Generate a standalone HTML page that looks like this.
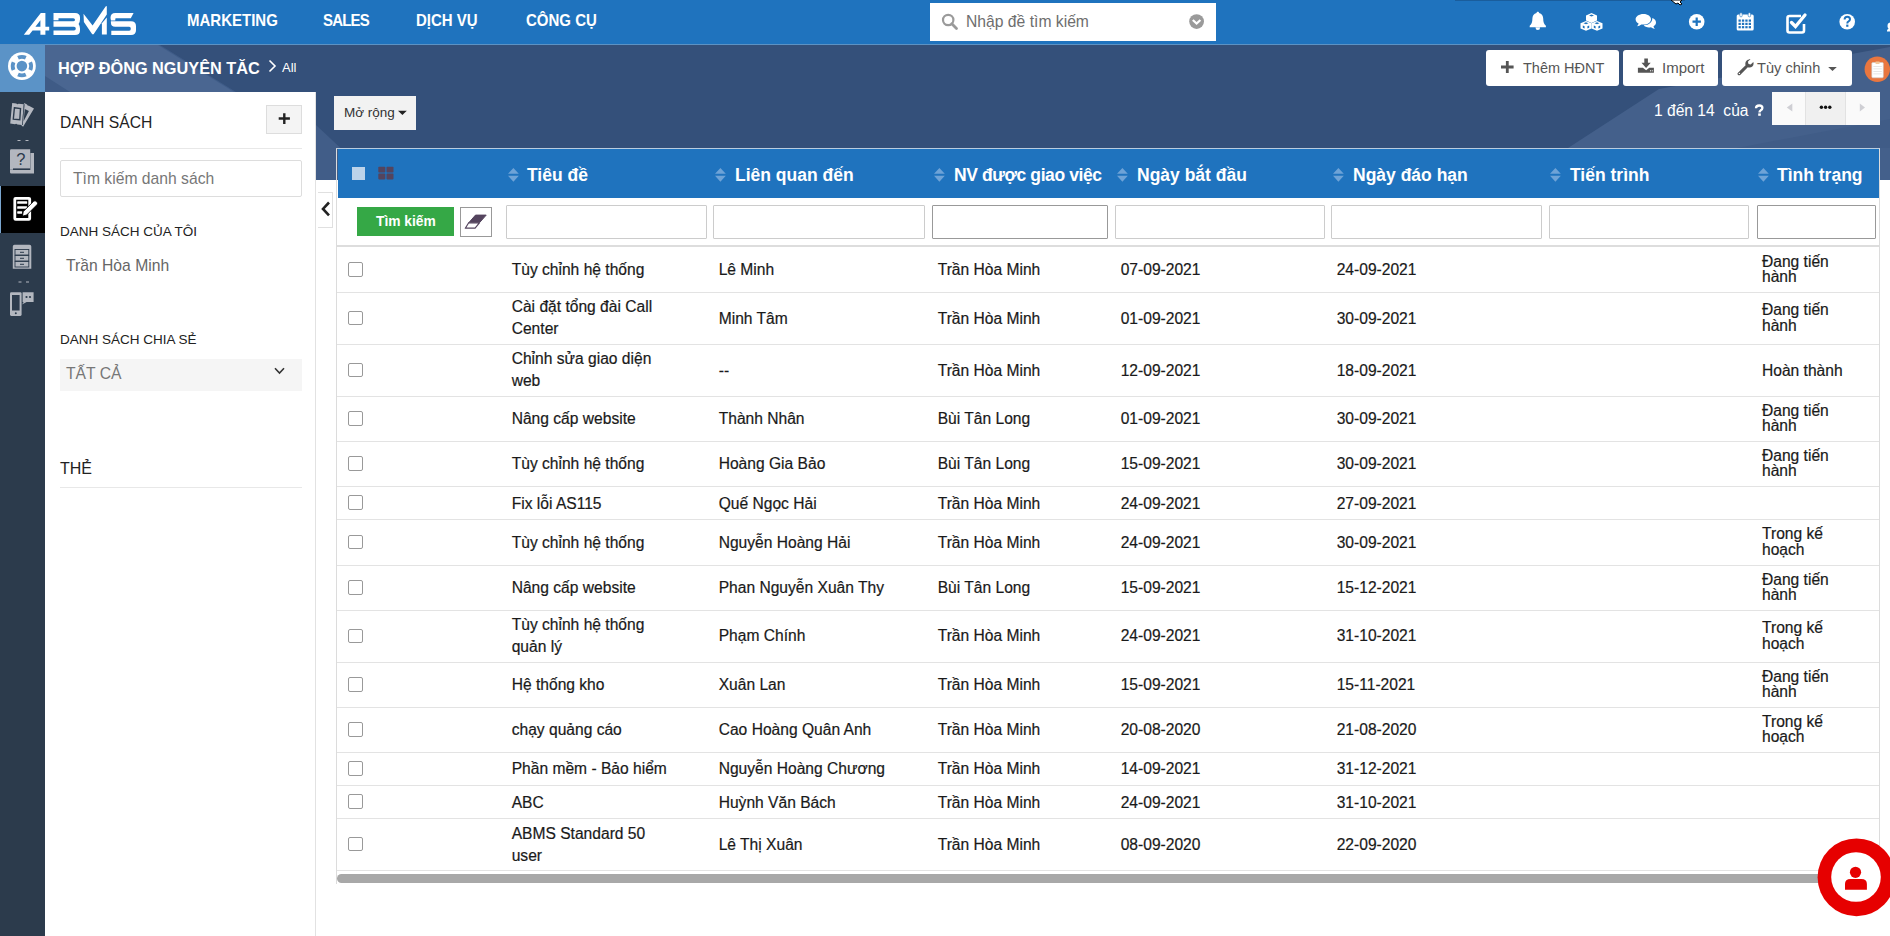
<!DOCTYPE html>
<html><head><meta charset="utf-8">
<style>
*{box-sizing:border-box;margin:0;padding:0}
html,body{width:1890px;height:936px;overflow:hidden;background:#fff;font-family:"Liberation Sans",sans-serif;color:#222}
.a{position:absolute}
#top{left:0;top:0;width:1890px;height:44px;background:#1f73be}
#topline{left:0;top:44px;width:1890px;height:1px;background:#5c92c4}
.nav{top:11px;font-size:15px;font-weight:bold;color:#fff;line-height:18px;transform:scaleY(1.1)}
#crumb{left:0;top:45px;width:1890px;height:891px;background:#34507a;overflow:hidden}
#side{left:0;top:92px;width:45px;height:844px;background:#2c3b4c}
#lifebuoy{left:0;top:45px;width:45px;height:47px;background:#5b93c7}
#panel{left:45px;top:92px;width:271px;height:844px;background:#fff;border-right:1px solid #e2e2e2}
#main{left:316px;top:180px;width:1574px;height:756px;background:#fff}
.btn{background:#fff;border-radius:3px;font-size:15px;color:#555;line-height:20px}
.hdr{top:149px;height:49px;background:#1f73be}
.hd{top:164px;font-size:17.5px;font-weight:bold;color:#fff;line-height:22px;white-space:nowrap}
.sort{top:168px;width:11px;height:14px}
.fin{top:205px;height:34px;border:1px solid #ccc;background:#fff;border-radius:1px}
.row{left:337px;width:1542px;border-bottom:1px solid #e3e3e3}
.c{font-size:15.6px;line-height:22px;color:#1a1a1a;white-space:nowrap;-webkit-text-stroke:0.2px #1a1a1a}
.st{font-size:15.6px;line-height:15.7px;color:#1a1a1a;-webkit-text-stroke:0.2px #1a1a1a}
.cb{width:14.5px;height:14.5px;border:1.2px solid #999;border-radius:2px;background:#fff}
</style></head><body>
<div id="crumb" class="a"></div>
<div id="top" class="a"></div>
<div id="topline" class="a"></div>
<div id="lifebuoy" class="a"></div>
<div id="side" class="a"></div>
<!-- background polys -->
<svg class="a" style="left:0;top:45px" width="1890" height="140" viewBox="0 45 1890 140">
<polygon points="45,45 160,45 236,92 316,92 316,185 45,185" fill="#3f5c88"/>
<polygon points="45,45 158,45 234,92 45,92" fill="#4a6691"/>
<polygon points="45,76 45,92 70,92" fill="#3f5b86"/>
<polygon points="316,125 316,185 380,185" fill="#415d88"/>
<polygon points="1568,148 1659,89 1890,47 1890,185 1568,185" fill="#44608b"/>
<polygon points="1737,148 1890,119 1890,148" fill="#405c87"/>
</svg>
<!-- lifebuoy -->
<svg class="a" style="left:0;top:45px" width="45" height="47" viewBox="0 0 45 47">
<circle cx="21.9" cy="21.1" r="13.9" fill="#fff"/>
<circle cx="21.9" cy="21.1" r="5.3" fill="#5b93c7"/>
<g fill="#5b93c7">
<path d="M17.21,11.04 A11.1,11.1 0 0 1 26.59,11.04 L24.99,14.48 A7.3,7.3 0 0 0 18.81,14.48 Z"/>
<path d="M17.21,31.16 A11.1,11.1 0 0 0 26.59,31.16 L24.99,27.72 A7.3,7.3 0 0 1 18.81,27.72 Z"/>
<path d="M11.84,16.41 A11.1,11.1 0 0 0 11.84,25.79 L15.28,24.19 A7.3,7.3 0 0 1 15.28,18.01 Z"/>
<path d="M31.96,16.41 A11.1,11.1 0 0 1 31.96,25.79 L28.52,24.19 A7.3,7.3 0 0 0 28.52,18.01 Z"/>
</g>
</svg>
<!-- breadcrumb chevron -->
<svg class="a" style="left:266px;top:58px" width="12" height="16" viewBox="0 0 12 16"><path d="M3.5,2.5 L9,8 L3.5,13.5" fill="none" stroke="#fff" stroke-width="1.6"/></svg>
<!-- sidebar -->
<svg class="a" style="left:0;top:92px" width="45" height="240" viewBox="0 92 45 240">
<path fill="#b5b9c1" d="M24.2,103.1 L27,104.6 Q27.6,106 28.9,105.8 L34,108.5 L23.1,126.7 L21.5,125.5 Z"/>
<path fill="#b5b9c1" d="M12.2,103.1 L16.3,103.5 Q17.4,104.8 18.6,103.8 L23.8,104.2 L22,124.9 L17.4,124.5 Q16.2,123.2 15,124.2 L10.2,123.5 Z"/>
<path fill="#2c3b4c" d="M23.8,104.2 L24.6,104.3 L22.8,125 L22,124.9 Z"/>
<path fill="#2c3b4c" d="M24.8,109 L28.9,111.1 L23.6,121.3 Z"/>
<polygon points="14.4,107.8 20.5,108.5 19.8,119.8 13.3,119.1" fill="none" stroke="#2c3b4c" stroke-width="1.4"/>
<rect x="17.5" y="140" width="3" height="1" fill="#b3b7bf"/><rect x="25.5" y="140" width="3" height="1" fill="#b3b7bf"/>
<path d="M10,150.5 q0,-1.2 1.2,-1.2 h19 v20.5 h-20.2 Z" fill="#b3b7bf"/>
<path d="M30.4,153 h3.6 v20.5 h-22.8 q-1.2,0 -1.2,-1.2 v-2.2 h20.4 Z" fill="#b3b7bf"/>
<rect x="13" y="168.4" width="17" height="1.6" fill="#2c3b4c"/>
<text x="20.8" y="165.3" font-family="Liberation Sans" font-size="16.5" fill="#2c3b4c" text-anchor="middle">?</text>
</svg>
<div class="a" style="left:0;top:186px;width:45px;height:47px;background:#000"></div>
<div class="a" style="left:0;top:186px;width:1px;height:47px;background:#7aa6d0"></div>
<svg class="a" style="left:0;top:186px" width="45" height="47" viewBox="0 186 45 47">
<rect x="14.8" y="198.3" width="14.9" height="21.1" rx="0.8" fill="none" stroke="#fff" stroke-width="2.8"/>
<g fill="#fff"><rect x="17.2" y="201.2" width="10" height="2.6" rx="0.6"/><rect x="17.2" y="206.2" width="10" height="2.6" rx="0.6"/><rect x="17.2" y="211.2" width="5" height="2.5" rx="0.6"/></g>
<path d="M22.4,216.2 L23.2,211.6 L33.6,201.3 Q35,200 36.4,201.4 L37,202 Q38.3,203.4 37,204.7 L26.7,215 Z" fill="#fff" stroke="#000" stroke-width="0.9"/>
</svg>
<svg class="a" style="left:0;top:236px" width="45" height="90" viewBox="0 236 45 90">
<path d="M14.5,244.7 h15 q1.8,0 1.8,1.8 v22.2 h-18.5 v-22.2 q0,-1.8 1.7,-1.8 Z" fill="#b3b7bf"/>
<g fill="none" stroke="#2c3b4c" stroke-width="0.9"><rect x="15" y="249.5" width="13.8" height="5.5"/><rect x="15" y="255.5" width="13.8" height="5.5"/><rect x="15" y="261.5" width="13.8" height="5.5"/></g>
<g fill="#2c3b4c"><rect x="20" y="251.8" width="4" height="1"/><rect x="20" y="257.8" width="4" height="1"/><rect x="20" y="263.8" width="4" height="1"/></g>
<rect x="18.5" y="281.5" width="3" height="1" fill="#b3b7bf"/><rect x="26" y="281.5" width="3" height="1" fill="#b3b7bf"/>
<rect x="10" y="292.3" width="11.6" height="23.6" rx="1.3" fill="#b3b7bf"/>
<rect x="12" y="295" width="7.6" height="15.5" fill="#2c3b4c"/>
<circle cx="15.8" cy="313.3" r="1" fill="#2c3b4c"/>
<path d="M22.6,292.3 h11 v9.8 h-7 l-4.5,2.5 l1.5,-2.5 h-1 Z" fill="#b3b7bf"/>
<circle cx="26.5" cy="297" r="1.1" fill="#2c3b4c"/><circle cx="30" cy="297" r="1.1" fill="#2c3b4c"/>
</svg>

<div id="panel" class="a"></div>
<div id="main" class="a"></div>

<!-- logo -->
<svg class="a" style="left:0;top:0" width="150" height="44" viewBox="0 0 150 44">
<path fill="#fff" fill-rule="evenodd" d="M23.8,34.8 L29.2,34.8 L32.6,30.5 L40.4,30.5 L40.4,34.8 L45.4,34.8 L45.4,30.5 L49.2,30.5 L49.2,26.7 L45.4,26.7 L45.4,13 L40.8,13 Z M35.4,26.7 L40.4,26.7 L40.4,20.2 Z"/>
<path fill="#fff" fill-rule="evenodd" d="M53.5,13 H75 Q80,13 80,17.5 V19.5 Q80,22 78.6,24 Q80,26 80,28.5 V30.5 Q80,35 75,35 H53.5 V30.5 H74 Q75.8,30.5 75.8,28.6 Q75.8,26.7 74,26.7 H53.5 V21.3 H73.3 Q75,21.3 75,19.75 Q75,18.2 73.3,18.2 H58.5 V20.3 H53.5 Z"/>
<path fill="#fff" d="M83.5,13.8 L92.6,25.4 L105.6,6.4 L106.8,6.1 L106.8,14.6 L93.6,34.3 L92.2,34.3 L83.9,21.9 Z"/>
<path fill="#fff" d="M101.9,23.2 L106.8,17.4 L106.8,34.5 L101.9,34.5 Z"/>
<path fill="#fff" d="M115.3,13 H133.6 L130.8,18.2 H115.8 Q115.3,18.2 115.3,19.2 V20.6 H111 Q110.5,18.5 110.5,17.8 Q110.5,13 115.3,13 Z"/>
<path fill="#fff" d="M110.9,21.2 H131 Q136,21.2 136,26 V30.2 Q136,34.9 131,34.9 H111.3 V30.8 H129.2 Q130.8,30.8 130.8,28.8 Q130.8,26.8 129.2,26.8 H115.2 Q110.9,26.8 110.9,22.5 Z"/>
</svg>
<!-- top dark line + cursor -->
<div class="a" style="left:1455px;top:0;width:230px;height:1px;background:#1a5d9c"></div>
<svg class="a" style="left:1668px;top:0" width="16" height="6" viewBox="0 0 16 6"><path d="M3,0 L8,4 L10,3 L12,5 L14,4 L12,2 L14,0 Z" fill="#fff" stroke="#000" stroke-width="1"/></svg>
<!-- top icons -->
<svg class="a" style="left:1525px;top:8px" width="26" height="26" viewBox="0 0 26 26">
<path fill="#fff" d="M12.8,3.7 c0.9,0 1.3,0.6 1.3,1.3 c2.7,0.6 4.1,2.8 4.1,5.6 c0,3.6 0.9,6 2.7,7.2 v1.4 H4.7 v-1.4 c1.8,-1.2 2.7,-3.6 2.7,-7.2 c0,-2.8 1.4,-5 4.1,-5.6 c0,-0.7 0.4,-1.3 1.3,-1.3 Z M10.5,19.4 h4.6 a2.3,2.6 0 0 1 -4.6,0 Z"/>
</svg>
<svg class="a" style="left:1578px;top:10px" width="27" height="23" viewBox="0 0 27 23">
<g fill="#fff">
<path d="M13.5,3.1 l5.5,2.3 v5.2 l-5.5,2.3 l-5.5,-2.3 v-5.2 Z"/>
<path d="M8,10.9 l5.5,2.3 v5.2 l-5.5,2.3 l-5.5,-2.3 v-5.2 Z"/>
<path d="M19,10.9 l5.5,2.3 v5.2 l-5.5,2.3 l-5.5,-2.3 v-5.2 Z"/>
</g>
<g fill="#1f73be">
<path d="M11,5.4 l2.5,-1 l2.5,1 l-2.5,1 Z"/>
<path d="M5.5,13.2 l2.5,-1 l2.5,1 l-2.5,1 Z"/>
<path d="M16.5,13.2 l2.5,-1 l2.5,1 l-2.5,1 Z"/>
<path d="M4.8,15.5 l1.8,0.8 v2.2 l-1.8,-0.8 Z"/><path d="M9.4,16.3 l1.8,-0.8 v2.2 l-1.8,0.8 Z"/>
<path d="M15.8,15.5 l1.8,0.8 v2.2 l-1.8,-0.8 Z"/><path d="M20.4,16.3 l1.8,-0.8 v2.2 l-1.8,0.8 Z"/>
</g>
</svg>
<svg class="a" style="left:1634px;top:11px" width="24" height="20" viewBox="0 0 24 20">
<path fill="#fff" d="M9.5,3 c4.5,0 7.5,2.5 7.5,5.3 c0,3 -3,5.3 -7.5,5.3 c-0.8,0 -1.5,-0.1 -2.2,-0.2 c-1.2,1 -2.7,1.6 -4.3,1.8 c0.8,-0.8 1.4,-1.6 1.6,-2.6 c-1.9,-1 -3,-2.6 -3,-4.3 c0,-2.8 3.4,-5.3 7.9,-5.3 Z"/>
<path fill="#fff" d="M18.3,7 c2.3,0.9 3.7,2.6 3.7,4.5 c0,1.6 -1,3 -2.5,3.8 c0.2,1 0.7,1.8 1.4,2.6 c-1.5,-0.2 -2.9,-0.8 -4,-1.7 c-0.6,0.1 -1.2,0.2 -1.9,0.2 c-2.3,0 -4.3,-0.8 -5.3,-2.1 c5.5,-0.2 8.8,-3.3 8.6,-7.3 Z"/>
</svg>
<svg class="a" style="left:1686px;top:11px" width="22" height="22" viewBox="0 0 22 22">
<circle cx="10.7" cy="10.7" r="7.8" fill="#fff"/>
<path d="M10.7,6.5 V14.9 M6.5,10.7 H14.9" stroke="#1f73be" stroke-width="2.2"/>
</svg>
<svg class="a" style="left:1734px;top:10px" width="22" height="24" viewBox="0 0 22 24">
<rect x="2.7" y="4.5" width="17" height="16" rx="1.5" fill="#fff"/>
<g fill="#1f73be">
<rect x="4.5" y="9.5" width="2.3" height="2.2"/><rect x="7.9" y="9.5" width="2.3" height="2.2"/><rect x="11.3" y="9.5" width="2.3" height="2.2"/><rect x="14.7" y="9.5" width="2.3" height="2.2"/>
<rect x="4.5" y="12.8" width="2.3" height="2.2"/><rect x="7.9" y="12.8" width="2.3" height="2.2"/><rect x="11.3" y="12.8" width="2.3" height="2.2"/><rect x="14.7" y="12.8" width="2.3" height="2.2"/>
<rect x="4.5" y="16.1" width="2.3" height="2.2"/><rect x="7.9" y="16.1" width="2.3" height="2.2"/><rect x="11.3" y="16.1" width="2.3" height="2.2"/><rect x="14.7" y="16.1" width="2.3" height="2.2"/>
</g>
<rect x="5.8" y="2.8" width="2.4" height="4" rx="1" fill="#fff" stroke="#1f73be" stroke-width="0.6"/>
<rect x="14.2" y="2.8" width="2.4" height="4" rx="1" fill="#fff" stroke="#1f73be" stroke-width="0.6"/>
</svg>
<svg class="a" style="left:1784px;top:11px" width="26" height="25" viewBox="0 0 26 25">
<path d="M17,5 H5.5 Q3.5,5 3.5,7 V19.5 Q3.5,21.5 5.5,21.5 H18 Q20,21.5 20,19.5 V13" fill="none" stroke="#fff" stroke-width="2.6"/>
<path d="M7.5,11.5 L11.5,15.5 L21,4" fill="none" stroke="#fff" stroke-width="3.3" stroke-linecap="round"/>
</svg>
<svg class="a" style="left:1837px;top:11px" width="22" height="22" viewBox="0 0 22 22">
<circle cx="10.2" cy="10.7" r="7.8" fill="#fff"/>
<path d="M7.6,8.6 Q7.6,5.8 10.3,5.8 Q13,5.8 13,8.3 Q13,9.8 11.3,10.6 Q10.3,11.1 10.3,12.5" fill="none" stroke="#1f73be" stroke-width="2"/>
<rect x="9.2" y="13.6" width="2.2" height="2.2" fill="#1f73be"/>
</svg>
<svg class="a" style="left:1880px;top:18px" width="10" height="16" viewBox="0 0 10 16"><circle cx="11" cy="8" r="3.5" fill="#fff"/><path d="M7,13 Q7,10.5 10,10.5 V13.5 H7Z" fill="#fff"/></svg>

<!-- nav -->
<div class="a nav" style="left:187px">MARKETING</div>
<div class="a nav" style="left:323px;letter-spacing:-0.8px">SALES</div>
<div class="a nav" style="left:416px">DỊCH VỤ</div>
<div class="a nav" style="left:526px">CÔNG CỤ</div>

<!-- search -->
<div class="a" style="left:930px;top:3px;width:286px;height:38px;background:#fff"></div>
<div class="a" style="left:966px;top:12px;font-size:15.7px;line-height:20px;color:#6e6e6e">Nhập đề tìm kiếm</div>

<svg class="a" style="left:940px;top:12px" width="20" height="20" viewBox="940 12 20 20">
<circle cx="948.2" cy="20" r="5.2" fill="none" stroke="#9a9a9a" stroke-width="2.2"/>
<path d="M951.8,23.8 L956.5,28.5" stroke="#9a9a9a" stroke-width="2.8" stroke-linecap="round"/>
</svg>
<svg class="a" style="left:1186px;top:12px" width="20" height="20" viewBox="1186 12 20 20">
<circle cx="1196.6" cy="21.6" r="7.4" fill="#9a9a9a"/>
<path d="M1192.8,20 L1196.6,23.6 L1200.4,20" fill="none" stroke="#fff" stroke-width="2.2"/>
</svg>
<!-- breadcrumb -->
<div class="a" style="left:58px;top:58px;font-size:16.3px;font-weight:bold;color:#fff;line-height:20px;white-space:nowrap">HỢP ĐÔNG NGUYÊN TĂC</div>
<div class="a" style="left:282px;top:60px;font-size:13px;color:#fff;line-height:16px">All</div>

<!-- buttons -->
<div class="a btn" style="left:1486px;top:50px;width:133px;height:36px"></div>
<div class="a btn" style="left:1623px;top:50px;width:95px;height:36px"></div>
<div class="a btn" style="left:1722px;top:50px;width:130px;height:36px"></div>
<div class="a" style="left:1523px;top:58px;font-size:14.5px;color:#555;line-height:20px">Thêm HĐNT</div>
<div class="a" style="left:1662px;top:58px;font-size:15px;color:#555;line-height:20px">Import</div>
<div class="a" style="left:1757px;top:58px;font-size:14.6px;color:#555;line-height:20px">Tùy chỉnh</div>

<!-- pagination -->
<div class="a" style="left:1654px;top:99.5px;font-size:15.6px;color:#fff;line-height:22px;white-space:pre">1 đến 14  của</div>
<div class="a" style="left:1772px;top:92px;width:108px;height:33px;background:#fafafa"></div>

<!-- mo rong -->
<div class="a" style="left:334px;top:96px;width:82px;height:34px;background:#f2f2f2"></div>
<div class="a" style="left:344px;top:102.5px;font-size:13.5px;color:#333;line-height:20px">Mở rộng</div>

<!-- panel content -->
<div class="a" style="left:60px;top:113px;font-size:15.7px;color:#222;line-height:20px">DANH SÁCH</div>
<div class="a" style="left:266px;top:105px;width:36px;height:29px;background:#f4f4f4;border:1px solid #ddd"></div>
<div class="a" style="left:60px;top:148px;width:242px;height:1px;background:#e8e8e8"></div>
<div class="a" style="left:60px;top:160px;width:242px;height:37px;border:1px solid #ddd;border-radius:2px"></div>
<div class="a" style="left:73px;top:169px;font-size:15.7px;color:#777;line-height:20px">Tìm kiếm danh sách</div>
<div class="a" style="left:60px;top:223.5px;font-size:13.5px;color:#222;line-height:16px">DANH SÁCH CỦA TÔI</div>
<div class="a" style="left:66px;top:256px;font-size:15.7px;color:#666;line-height:20px">Trần Hòa Minh</div>
<div class="a" style="left:60px;top:332px;font-size:13.5px;color:#222;line-height:16px">DANH SÁCH CHIA SẺ</div>
<div class="a" style="left:60px;top:359px;width:242px;height:32px;background:#f5f5f5"></div>
<div class="a" style="left:66px;top:364px;font-size:15.7px;color:#777;line-height:20px">TẤT CẢ</div>
<div class="a" style="left:60px;top:458.5px;font-size:16px;color:#222;line-height:20px">THẺ</div>
<div class="a" style="left:60px;top:487px;width:242px;height:1px;background:#e8e8e8"></div>

<!-- table -->
<div class="a" style="left:336px;top:148px;width:1544px;height:736px;border:1px solid #dcdcdc;border-bottom:none;border-top-color:#b9cde0"></div>
<div class="a hdr" style="left:338px;width:1541px"></div>
<div class="a" style="left:337px;top:198px;width:1542px;height:47px;background:#fff"></div>
<div class="a" style="left:337px;top:245px;width:1542px;height:2px;background:#dddddd"></div>
<!-- header cells -->

<div class="a hd" style="left:527px">Tiêu đề</div>
<div class="a hd" style="left:735px">Liên quan đến</div>
<div class="a hd" style="left:954px;letter-spacing:-0.4px">NV được giao việc</div>
<div class="a hd" style="left:1137px">Ngày bắt đầu</div>
<div class="a hd" style="left:1353px">Ngày đáo hạn</div>
<div class="a hd" style="left:1570px">Tiến trình</div>
<div class="a hd" style="left:1777px">Tình trạng</div>
<!-- filter -->
<div class="a" style="left:357px;top:207px;width:97px;height:29px;background:#35a846"></div>
<div class="a" style="left:376px;top:213px;font-size:13.8px;font-weight:bold;color:#fff;line-height:18px">Tìm kiếm</div>
<div class="a" style="left:460px;top:207px;width:32px;height:30px;border:1px solid #999;background:#fff"></div>
<div class="a fin" style="left:506px;width:201px"></div>
<div class="a fin" style="left:713px;width:212px"></div>
<div class="a fin" style="left:932px;width:176px;border-color:#999"></div>
<div class="a fin" style="left:1115px;width:210px"></div>
<div class="a fin" style="left:1331px;width:211px"></div>
<div class="a fin" style="left:1549px;width:200px"></div>
<div class="a fin" style="left:1757px;width:119px;border-color:#999"></div>
<!--ROWS-->
<div class="a row" style="top:247px;height:46px"></div>
<div class="a cb" style="left:348px;top:262.3px"></div>
<div class="a c" style="left:511.7px;top:258.5px">Tùy chỉnh hệ thống</div>
<div class="a c" style="left:718.7px;top:258.5px">Lê Minh</div>
<div class="a c" style="left:937.7px;top:258.5px">Trần Hòa Minh</div>
<div class="a c" style="left:1120.7px;top:258.5px">07-09-2021</div>
<div class="a c" style="left:1336.7px;top:258.5px">24-09-2021</div>
<div class="a st" style="left:1762px;top:253.5px">Đang tiến<br>hành</div>
<div class="a row" style="top:292px;height:53px"></div>
<div class="a cb" style="left:348px;top:310.8px"></div>
<div class="a c" style="left:511.7px;top:296.0px">Cài đặt tổng đài Call<br>Center</div>
<div class="a c" style="left:718.7px;top:308.0px">Minh Tâm</div>
<div class="a c" style="left:937.7px;top:308.0px">Trần Hòa Minh</div>
<div class="a c" style="left:1120.7px;top:308.0px">01-09-2021</div>
<div class="a c" style="left:1336.7px;top:308.0px">30-09-2021</div>
<div class="a st" style="left:1762px;top:302.0px">Đang tiến<br>hành</div>
<div class="a row" style="top:344px;height:53px"></div>
<div class="a cb" style="left:348px;top:362.8px"></div>
<div class="a c" style="left:511.7px;top:348.0px">Chỉnh sửa giao diện<br>web</div>
<div class="a c" style="left:718.7px;top:360.0px">--</div>
<div class="a c" style="left:937.7px;top:360.0px">Trần Hòa Minh</div>
<div class="a c" style="left:1120.7px;top:360.0px">12-09-2021</div>
<div class="a c" style="left:1336.7px;top:360.0px">18-09-2021</div>
<div class="a st" style="left:1762px;top:362.6px">Hoàn thành</div>
<div class="a row" style="top:396px;height:46px"></div>
<div class="a cb" style="left:348px;top:411.3px"></div>
<div class="a c" style="left:511.7px;top:407.5px">Nâng cấp website</div>
<div class="a c" style="left:718.7px;top:407.5px">Thành Nhân</div>
<div class="a c" style="left:937.7px;top:407.5px">Bùi Tân Long</div>
<div class="a c" style="left:1120.7px;top:407.5px">01-09-2021</div>
<div class="a c" style="left:1336.7px;top:407.5px">30-09-2021</div>
<div class="a st" style="left:1762px;top:402.5px">Đang tiến<br>hành</div>
<div class="a row" style="top:441px;height:46px"></div>
<div class="a cb" style="left:348px;top:456.3px"></div>
<div class="a c" style="left:511.7px;top:452.5px">Tùy chỉnh hệ thống</div>
<div class="a c" style="left:718.7px;top:452.5px">Hoàng Gia Bảo</div>
<div class="a c" style="left:937.7px;top:452.5px">Bùi Tân Long</div>
<div class="a c" style="left:1120.7px;top:452.5px">15-09-2021</div>
<div class="a c" style="left:1336.7px;top:452.5px">30-09-2021</div>
<div class="a st" style="left:1762px;top:447.5px">Đang tiến<br>hành</div>
<div class="a row" style="top:486px;height:34px"></div>
<div class="a cb" style="left:348px;top:495.3px"></div>
<div class="a c" style="left:511.7px;top:492.5px">Fix lỗi AS115</div>
<div class="a c" style="left:718.7px;top:492.5px">Quế Ngọc Hải</div>
<div class="a c" style="left:937.7px;top:492.5px">Trần Hòa Minh</div>
<div class="a c" style="left:1120.7px;top:492.5px">24-09-2021</div>
<div class="a c" style="left:1336.7px;top:492.5px">27-09-2021</div>
<div class="a row" style="top:519px;height:47px"></div>
<div class="a cb" style="left:348px;top:534.8px"></div>
<div class="a c" style="left:511.7px;top:532.0px">Tùy chỉnh hệ thống</div>
<div class="a c" style="left:718.7px;top:532.0px">Nguyễn Hoàng Hải</div>
<div class="a c" style="left:937.7px;top:532.0px">Trần Hòa Minh</div>
<div class="a c" style="left:1120.7px;top:532.0px">24-09-2021</div>
<div class="a c" style="left:1336.7px;top:532.0px">30-09-2021</div>
<div class="a st" style="left:1762px;top:526.0px">Trong kế<br>hoạch</div>
<div class="a row" style="top:565px;height:46px"></div>
<div class="a cb" style="left:348px;top:580.3px"></div>
<div class="a c" style="left:511.7px;top:576.5px">Nâng cấp website</div>
<div class="a c" style="left:718.7px;top:576.5px">Phan Nguyễn Xuân Thy</div>
<div class="a c" style="left:937.7px;top:576.5px">Bùi Tân Long</div>
<div class="a c" style="left:1120.7px;top:576.5px">15-09-2021</div>
<div class="a c" style="left:1336.7px;top:576.5px">15-12-2021</div>
<div class="a st" style="left:1762px;top:571.5px">Đang tiến<br>hành</div>
<div class="a row" style="top:610px;height:53px"></div>
<div class="a cb" style="left:348px;top:628.8px"></div>
<div class="a c" style="left:511.7px;top:614.0px">Tùy chỉnh hệ thống<br>quản lý</div>
<div class="a c" style="left:718.7px;top:625.0px">Phạm Chính</div>
<div class="a c" style="left:937.7px;top:625.0px">Trần Hòa Minh</div>
<div class="a c" style="left:1120.7px;top:625.0px">24-09-2021</div>
<div class="a c" style="left:1336.7px;top:625.0px">31-10-2021</div>
<div class="a st" style="left:1762px;top:620.0px">Trong kế<br>hoạch</div>
<div class="a row" style="top:662px;height:46px"></div>
<div class="a cb" style="left:348px;top:677.3px"></div>
<div class="a c" style="left:511.7px;top:673.5px">Hệ thống kho</div>
<div class="a c" style="left:718.7px;top:673.5px">Xuân Lan</div>
<div class="a c" style="left:937.7px;top:673.5px">Trần Hòa Minh</div>
<div class="a c" style="left:1120.7px;top:673.5px">15-09-2021</div>
<div class="a c" style="left:1336.7px;top:673.5px">15-11-2021</div>
<div class="a st" style="left:1762px;top:668.5px">Đang tiến<br>hành</div>
<div class="a row" style="top:707px;height:46px"></div>
<div class="a cb" style="left:348px;top:722.3px"></div>
<div class="a c" style="left:511.7px;top:718.5px">chạy quảng cáo</div>
<div class="a c" style="left:718.7px;top:718.5px">Cao Hoàng Quân Anh</div>
<div class="a c" style="left:937.7px;top:718.5px">Trần Hòa Minh</div>
<div class="a c" style="left:1120.7px;top:718.5px">20-08-2020</div>
<div class="a c" style="left:1336.7px;top:718.5px">21-08-2020</div>
<div class="a st" style="left:1762px;top:713.5px">Trong kế<br>hoạch</div>
<div class="a row" style="top:752px;height:34px"></div>
<div class="a cb" style="left:348px;top:761.3px"></div>
<div class="a c" style="left:511.7px;top:757.5px">Phần mềm - Bảo hiểm</div>
<div class="a c" style="left:718.7px;top:757.5px">Nguyễn Hoàng Chương</div>
<div class="a c" style="left:937.7px;top:757.5px">Trần Hòa Minh</div>
<div class="a c" style="left:1120.7px;top:757.5px">14-09-2021</div>
<div class="a c" style="left:1336.7px;top:757.5px">31-12-2021</div>
<div class="a row" style="top:785px;height:34px"></div>
<div class="a cb" style="left:348px;top:794.3px"></div>
<div class="a c" style="left:511.7px;top:791.5px">ABC</div>
<div class="a c" style="left:718.7px;top:791.5px">Huỳnh Văn Bách</div>
<div class="a c" style="left:937.7px;top:791.5px">Trần Hòa Minh</div>
<div class="a c" style="left:1120.7px;top:791.5px">24-09-2021</div>
<div class="a c" style="left:1336.7px;top:791.5px">31-10-2021</div>
<div class="a row" style="top:818px;height:53px"></div>
<div class="a cb" style="left:348px;top:836.8px"></div>
<div class="a c" style="left:511.7px;top:823.0px">ABMS Standard 50<br>user</div>
<div class="a c" style="left:718.7px;top:834.0px">Lê Thị Xuân</div>
<div class="a c" style="left:937.7px;top:834.0px">Trần Hòa Minh</div>
<div class="a c" style="left:1120.7px;top:834.0px">08-09-2020</div>
<div class="a c" style="left:1336.7px;top:834.0px">22-09-2020</div>
<!--/ROWS-->
<!-- button icons -->
<svg class="a" style="left:1500px;top:60px" width="15" height="14" viewBox="0 0 15 14"><path d="M7.3,1 V13 M1,7 H13.6" stroke="#555" stroke-width="2.8"/></svg>
<svg class="a" style="left:1637px;top:58px" width="18" height="16" viewBox="1637 58 18 16">
<path fill="#555" d="M1644.3,58.4 h3.6 v4.3 h2.8 l-4.6,5.2 l-4.6,-5.2 h2.8 Z"/>
<path fill="#555" d="M1637.9,67.7 h5 l3.2,2.6 l3.2,-2.6 h4.6 v5 h-16 Z"/>
<rect x="1650" y="70.3" width="1" height="1" fill="#fff"/><rect x="1651.8" y="70.3" width="1" height="1" fill="#fff"/>
</svg>
<svg class="a" style="left:1736px;top:59px" width="18" height="17" viewBox="1736 59 18 17">
<path fill="#555" d="M1749.5,59.5 c-2.4,0 -4.2,1.9 -4.2,4.2 c0,0.5 0.1,1 0.3,1.5 l-7.6,7.5 c-0.7,0.7 -0.7,1.6 0,2.2 c0.6,0.6 1.6,0.6 2.2,0 l7.6,-7.6 c0.5,0.2 1,0.3 1.6,0.3 c2.3,0 4.2,-1.9 4.2,-4.2 c0,-0.6 -0.1,-1.1 -0.3,-1.5 l-2.6,2.6 l-2.2,-0.6 l-0.6,-2.2 l2.6,-2.6 c-0.4,-0.2 -0.9,-0.3 -1.5,-0.3 Z"/>
<circle cx="1739.4" cy="73.4" r="0.7" fill="#fff"/>
</svg>
<svg class="a" style="left:1827px;top:66px" width="11" height="6" viewBox="0 0 11 6"><path d="M1.2,1 H9.8 L5.5,5 Z" fill="#555"/></svg>
<!-- orange clip -->
<svg class="a" style="left:1860px;top:52px" width="30" height="34" viewBox="1860 52 30 34">
<circle cx="1877.3" cy="69.2" r="12.7" fill="#e9763f"/>
<rect x="1871.8" y="62.5" width="11.5" height="15.3" rx="1" fill="#fff" stroke="#c9c9c9" stroke-width="0.6"/>
<rect x="1875.3" y="61.5" width="4.5" height="2.4" rx="0.8" fill="#f2c79b"/>
<g fill="#e0e0e0"><rect x="1873.3" y="66" width="8.5" height="0.8"/><rect x="1873.3" y="68.5" width="8.5" height="0.8"/><rect x="1873.3" y="71" width="8.5" height="0.8"/><rect x="1873.3" y="73.5" width="8.5" height="0.8"/></g>
</svg>
<!-- pagination details -->
<div class="a" style="left:1805px;top:92px;width:41px;height:33px;background:#f0f0f0;border-left:1px solid #e2e2e2;border-right:1px solid #e2e2e2"></div>
<svg class="a" style="left:1772px;top:92px" width="108" height="33" viewBox="1772 92 108 33">
<path d="M1792.3,103.4 v8.1 l-5.5,-4.05 Z" fill="#cfcfd4"/>
<path d="M1859.8,103.4 v8.1 l5.2,-4.05 Z" fill="#cfcfd4"/>
<circle cx="1821.4" cy="107.3" r="1.7" fill="#111"/><circle cx="1825.6" cy="107.3" r="1.7" fill="#111"/><circle cx="1829.8" cy="107.3" r="1.7" fill="#111"/>
</svg>
<svg class="a" style="left:1753px;top:103px" width="12" height="14" viewBox="1753 103 12 14">
<path d="M1756,108.2 Q1756,105.5 1759.2,105.5 Q1762.4,105.5 1762.4,108 Q1762.4,109.6 1760.6,110.4 Q1759.5,111 1759.5,112.4" fill="none" stroke="#fff" stroke-width="2.3"/>
<rect x="1758.2" y="113.4" width="2.6" height="2.4" fill="#fff"/>
</svg>
<!-- mo rong caret -->
<svg class="a" style="left:397px;top:110px" width="11" height="6" viewBox="0 0 11 6"><path d="M1,0.8 H9.8 L5.4,5.1 Z" fill="#222"/></svg>
<!-- panel plus -->
<svg class="a" style="left:277px;top:112px" width="14" height="13" viewBox="0 0 14 13"><path d="M7.3,1.2 V11.9 M1.7,6.55 H12.9" stroke="#222" stroke-width="2.4"/></svg>
<!-- dropdown chevron -->
<svg class="a" style="left:273px;top:366px" width="13" height="10" viewBox="0 0 13 10"><path d="M2,2.3 L6.5,7 L11,2.3" fill="none" stroke="#333" stroke-width="1.6"/></svg>
<!-- collapse -->
<div class="a" style="left:318px;top:192px;width:15px;height:36px;border:1px solid #e0e0e0;border-left:none;background:#fff"></div>
<svg class="a" style="left:318px;top:198px" width="16" height="22" viewBox="0 0 16 22"><path d="M11,4.5 L5,10.9 L11,17.3" fill="none" stroke="#222" stroke-width="2.6"/></svg>
<!-- header icons -->
<div class="a" style="left:352px;top:167px;width:13px;height:13px;background:#bcd3ea"></div>
<svg class="a" style="left:378px;top:166px" width="16" height="15" viewBox="0 0 16 15"><g fill="#54445e"><rect x="0.3" y="0.8" width="7" height="5.8" rx="0.8"/><rect x="8.5" y="0.8" width="7" height="5.8" rx="0.8"/><rect x="0.3" y="7.6" width="7" height="5.8" rx="0.8"/><rect x="8.5" y="7.6" width="7" height="5.8" rx="0.8"/></g></svg>
<svg class="a" style="left:0;top:0;pointer-events:none" width="1890" height="200" viewBox="0 0 1890 200"><g fill="#6ea3d7">
<path d="M508,173.8 L513.4,168 L518.8,173.8 Z M508,175.8 H518.8 L513.4,181.8 Z"/>
<path d="M715,173.8 L720.4,168 L725.8,173.8 Z M715,175.8 H725.8 L720.4,181.8 Z"/>
<path d="M934,173.8 L939.4,168 L944.8,173.8 Z M934,175.8 H944.8 L939.4,181.8 Z"/>
<path d="M1117,173.8 L1122.4,168 L1127.8,173.8 Z M1117,175.8 H1127.8 L1122.4,181.8 Z"/>
<path d="M1333,173.8 L1338.4,168 L1343.8,173.8 Z M1333,175.8 H1343.8 L1338.4,181.8 Z"/>
<path d="M1550,173.8 L1555.4,168 L1560.8,173.8 Z M1550,175.8 H1560.8 L1555.4,181.8 Z"/>
<path d="M1758,173.8 L1763.4,168 L1768.8,173.8 Z M1758,175.8 H1768.8 L1763.4,181.8 Z"/>
</g></svg>
<!-- eraser -->
<svg class="a" style="left:460px;top:207px" width="32" height="30" viewBox="460 207 32 30">
<path d="M475.5,215.1 H486.2 L479.4,222.8 H468.7 Z" fill="#54445e" stroke="#54445e" stroke-width="1" stroke-linejoin="round"/>
<path d="M468.7,222.8 H479.4 L475.1,228.2 H465.3 Z" fill="#fff" stroke="#54445e" stroke-width="1.2" stroke-linejoin="round"/>
</svg>
<!-- scrollbar -->
<div class="a" style="left:337px;top:874px;width:1560px;height:9px;background:#a8a8a8;border-radius:4.5px"></div>
<!-- red float -->
<svg class="a" style="left:1810px;top:830px" width="80" height="95" viewBox="1810 830 80 95">
<circle cx="1856.5" cy="877.3" r="38.9" fill="#e60000"/>
<circle cx="1856" cy="877" r="24.8" fill="#fff"/>
<circle cx="1855.5" cy="872.3" r="5.6" fill="#e60000"/>
<path d="M1845,889.8 V884 Q1845,879 1850.5,879 H1861.3 Q1866.9,879 1866.9,884 V889.8 Z" fill="#e60000"/>
</svg>
</body></html>
